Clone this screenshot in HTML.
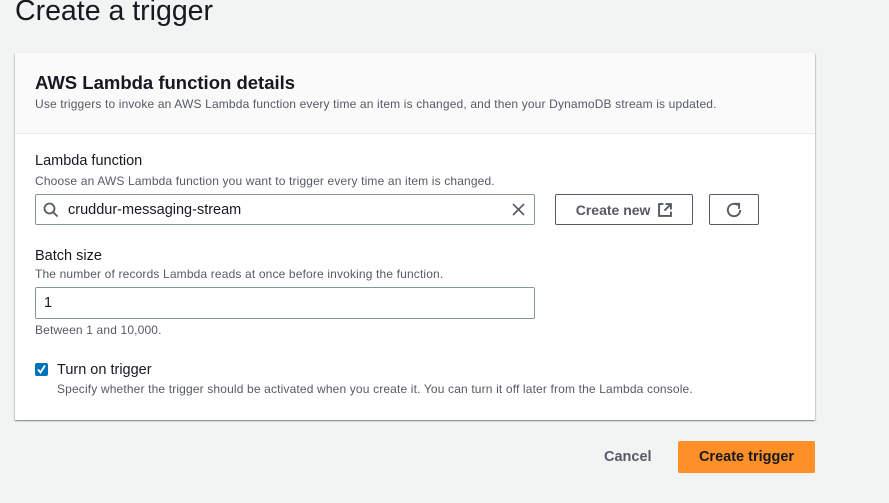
<!DOCTYPE html>
<html><head><style>
body{margin:0;width:889px;height:503px;background:#f2f3f3;font-family:"Liberation Sans",sans-serif;color:#16191f;position:relative;overflow:hidden}
.a{position:absolute;white-space:nowrap}
h1{position:absolute;left:15px;top:-5px;margin:0;font-size:28.5px;font-weight:400}
.card{position:absolute;left:15px;top:53px;width:800px;height:367px;background:#fff;box-shadow:0 1px 1px rgba(0,28,36,.3),1px 1px 1px rgba(0,28,36,.15),-1px 1px 1px rgba(0,28,36,.15)}
.hdr{position:absolute;left:0;top:0;width:800px;height:80px;background:#fafafa;border-bottom:1px solid #eaeded}
.inp{position:absolute;border:1px solid #879596;border-radius:2px;background:#fff;box-sizing:border-box}
.btn{position:absolute;border:1px solid #545b64;border-radius:2px;box-sizing:border-box;font-weight:700;font-size:14px;color:#545b64;display:flex;align-items:center;justify-content:center}
.s{font-size:12px;letter-spacing:0.15px;color:#545b64}
.l{font-size:14.5px}
</style></head><body>
<h1>Create a trigger</h1>
<div class="card"><div class="hdr"></div>
<div class="a" style="left:20px;top:19px;font-size:18.5px;font-weight:700">AWS Lambda function details</div>
<div class="a s" style="left:20px;top:44px">Use triggers to invoke an AWS Lambda function every time an item is changed, and then your DynamoDB stream is updated.</div>
</div>
<div class="a l" style="left:35px;top:153px">Lambda function</div>
<div class="a s" style="left:35px;top:174px">Choose an AWS Lambda function you want to trigger every time an item is changed.</div>
<div class="inp" style="left:35px;top:194px;width:500px;height:31px"></div>
<svg class="a" style="left:43px;top:202px" width="16" height="16" viewBox="0 0 16 16"><circle cx="6.5" cy="6.5" r="5" fill="none" stroke="#545b64" stroke-width="1.8"/><path d="M10 10l4.5 4.5" stroke="#545b64" stroke-width="1.8"/></svg>
<div class="a l" style="left:68px;top:202px">cruddur-messaging-stream</div>
<svg class="a" style="left:512px;top:203px" width="13" height="13" viewBox="0 0 13 13"><path d="M1 1l11 11M12 1L1 12" stroke="#545b64" stroke-width="1.6"/></svg>
<div class="btn" style="left:555px;top:194px;width:138px;height:31px">Create new&nbsp;&nbsp;<svg width="14" height="14" viewBox="0 0 13 13"><path d="M5 1H1v11h11V8M7 1h5v5M12 1L6 7" fill="none" stroke="#545b64" stroke-width="1.8"/></svg></div>
<div class="btn" style="left:709px;top:194px;width:50px;height:31px"><svg width="18" height="18" viewBox="0 0 16 16"><path d="M13.5 8a5.5 5.5 0 1 1-2.2-4.4" fill="none" stroke="#545b64" stroke-width="1.7"/><path d="M8 2.5h4.5V7" fill="none" stroke="#545b64" stroke-width="1.7"/></svg></div>
<div class="a l" style="left:35px;top:248px">Batch size</div>
<div class="a s" style="left:35px;top:267px">The number of records Lambda reads at once before invoking the function.</div>
<div class="inp" style="left:35px;top:287px;width:500px;height:32px"></div>
<div class="a l" style="left:44px;top:295px">1</div>
<div class="a s" style="left:35px;top:323px">Between 1 and 10,000.</div>
<div class="a" style="left:35px;top:363px;width:13px;height:13px;background:#0073bb;border-radius:2px"><svg width="13" height="13" viewBox="0 0 13 13" style="display:block"><path d="M3 6.5l2.5 3L10 2.5" fill="none" stroke="#fff" stroke-width="1.8"/></svg></div>
<div class="a l" style="left:57px;top:362px">Turn on trigger</div>
<div class="a s" style="left:57px;top:382px">Specify whether the trigger should be activated when you create it. You can turn it off later from the Lambda console.</div>
<div class="a" style="left:604px;top:449px;font-size:14.5px;font-weight:700;color:#545b64">Cancel</div>
<div class="a" style="left:678px;top:441px;width:137px;height:32px;background:#ff9028;border-radius:2px;font-size:14.5px;font-weight:700;display:flex;align-items:center;justify-content:center">Create trigger</div>
</body></html>
